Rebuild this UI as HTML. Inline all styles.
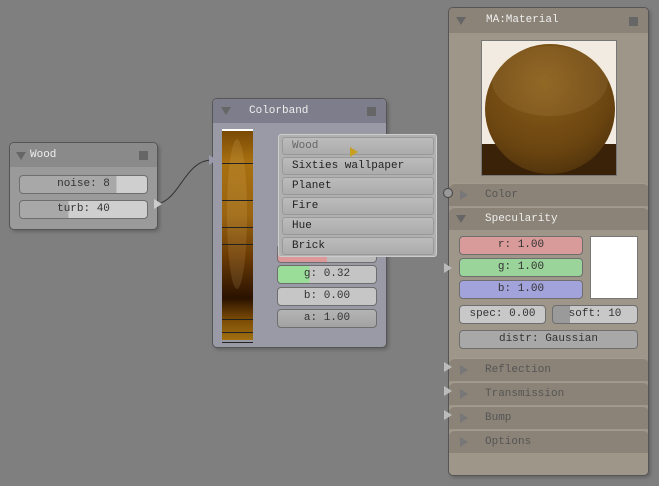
<!DOCTYPE html><html><head><style>
body{margin:0;width:659px;height:486px;background:#7f7f7f;position:relative;overflow:hidden;font-family:"Liberation Mono",monospace;font-size:11px}
.a{position:absolute;box-sizing:border-box}
.btn{position:absolute;box-sizing:border-box;border:1px solid #6e6e6e;border-radius:4px;background:linear-gradient(#b4b4b4,#a2a2a2);color:#333;text-align:center;line-height:17px;height:19px}
.tri{position:absolute;width:0;height:0;border-left:5px solid transparent;border-right:5px solid transparent;border-top:8px solid #666}
.rt{position:absolute;width:0;height:0;border-top:5px solid transparent;border-bottom:5px solid transparent;border-left:8px solid #777}
.sq{position:absolute;width:9px;height:9px;background:#666}
.row{position:absolute;left:0;width:200px;height:23px;background:#8b8377;border-top:1px solid #a39b8f;color:#555;line-height:23px;padding-left:36px;box-sizing:border-box;border-radius:6px 6px 0 0}
.mi{position:absolute;left:3px;width:152px;height:18px;box-sizing:border-box;border:1px solid #999;border-radius:3px;background:linear-gradient(#bcbcbc,#acacac);color:#222;padding-left:9px;line-height:16px}
</style></head><body>
<svg class="a" style="left:0;top:0" width="659" height="486"><path d="M157 204 C180 200,185 160,212 160" stroke="#333" fill="none"/></svg>
<!-- Wood -->
<div class="a" style="left:9px;top:142px;width:149px;height:88px;background:#9a9a9a;border:1px solid #555;border-radius:5px;box-shadow:2px 2px 3px #666">
 <div class="a" style="left:0;top:0;width:147px;height:24px;background:#8a8a8a;border-radius:5px 5px 0 0;color:#eee;line-height:24px;padding-left:20px">Wood</div>
 <div class="tri" style="left:6px;top:9px"></div><div class="sq" style="left:129px;top:8px"></div>
 <div class="btn" style="left:9px;top:32px;width:129px;background:linear-gradient(90deg,#a8a8a8 76%,#cfcfcf 76%)">noise: 8</div>
 <div class="btn" style="left:9px;top:57px;width:129px;background:linear-gradient(90deg,#a8a8a8 38%,#cfcfcf 38%)">turb: 40</div>
</div>
<div class="rt" style="left:154px;top:199px;border-left-color:#ccc"></div>
<!-- Colorband -->
<div class="a" style="left:212px;top:98px;width:175px;height:250px;background:#9a9aa6;border:1px solid #555;border-radius:5px;box-shadow:2px 2px 3px #666">
 <div class="a" style="left:0;top:0;width:173px;height:24px;background:#7d7d8b;border-radius:5px 5px 0 0;color:#eee;line-height:24px;padding-left:36px">Colorband</div>
 <div class="tri" style="left:8px;top:8px"></div><div class="sq" style="left:154px;top:8px"></div>
 <div class="a" style="left:9px;top:32px;width:31px;height:209px;background:linear-gradient(#7a4a05,#a87010 15%,#9a6410 40%,#6a3a05 60%,#2a1200 80%,#7a4a05 90%,#a07010)"></div>
 <div class="a" style="left:14px;top:40px;width:20px;height:150px;border-radius:50%;background:rgba(255,220,150,0.12)"></div>
 <div class="a" style="left:9px;top:30px;width:31px;height:2px;background:#fff"></div>
 <div class="a" style="left:9px;top:64px;width:31px;height:1px;background:#222"></div>
 <div class="a" style="left:9px;top:101px;width:31px;height:1px;background:#222"></div>
 <div class="a" style="left:9px;top:128px;width:31px;height:1px;background:#222"></div>
 <div class="a" style="left:9px;top:145px;width:31px;height:1px;background:#222"></div>
 <div class="a" style="left:9px;top:220px;width:31px;height:1px;background:#222"></div>
 <div class="a" style="left:9px;top:233px;width:31px;height:1px;background:#222"></div>
 <div class="a" style="left:9px;top:243px;width:31px;height:1px;background:#222"></div>
 <div class="btn" style="left:64px;top:145px;width:100px;background:linear-gradient(90deg,#d99 50%,#bbb 50%)">r: 0.50</div>
 <div class="btn" style="left:64px;top:166px;width:100px;background:linear-gradient(90deg,#9d9 32%,#c4c4c4 32%)">g: 0.32</div>
 <div class="btn" style="left:64px;top:188px;width:100px;background:#c6c6c6">b: 0.00</div>
 <div class="btn" style="left:64px;top:210px;width:100px">a: 1.00</div>
</div>
<div class="rt" style="left:209px;top:155px;border-left-color:#99a"></div>
<!-- menu -->
<div class="a" style="left:278px;top:134px;width:159px;height:123px;background:#b0b0b0;border:1px solid #ccc;border-radius:3px">
 <div class="mi" style="top:2px;color:#666">Wood</div>
 <div class="mi" style="top:22px">Sixties wallpaper</div>
 <div class="mi" style="top:42px">Planet</div>
 <div class="mi" style="top:62px">Fire</div>
 <div class="mi" style="top:82px">Hue</div>
 <div class="mi" style="top:102px">Brick</div>
</div>
<div class="rt" style="left:350px;top:147px;border-left-color:#c8a020"></div>
<!-- Material -->
<div class="a" style="left:448px;top:7px;width:201px;height:469px;background:#9e9689;border:1px solid #555;border-radius:5px;box-shadow:2px 2px 3px #666;overflow:hidden">
 <div class="a" style="left:0;top:0;width:200px;height:25px;background:#8b8377;color:#eee;line-height:25px;padding-left:37px">MA:Material</div>
 <div class="tri" style="left:7px;top:9px"></div><div class="sq" style="left:180px;top:9px"></div>
 <div class="a" style="left:32px;top:32px;width:136px;height:136px;background:linear-gradient(#f2ebe2 77%,#3a2208 77%);border:1px solid #777;overflow:hidden">
  <div class="a" style="left:3px;top:3px;width:130px;height:130px;border-radius:50%;background:radial-gradient(circle at 45% 30%,#8a5e1a,#6a4410 60%,#3a2508)"></div>
  <div class="a" style="left:10px;top:5px;width:116px;height:70px;border-radius:50%;background:rgba(255,230,180,0.08)"></div>
 </div>
 <div class="row" style="top:175px">Color</div>
 <div class="rt" style="left:11px;top:182px;border-left-color:#777"></div>
 <div class="row" style="top:199px;color:#eee">Specularity</div>
 <div class="tri" style="left:7px;top:207px"></div>
 <div class="btn" style="left:10px;top:228px;width:124px;background:#d99a9a">r: 1.00</div>
 <div class="btn" style="left:10px;top:250px;width:124px;background:#9ad49a">g: 1.00</div>
 <div class="btn" style="left:10px;top:272px;width:124px;background:#a3a3dc">b: 1.00</div>
 <div class="a" style="left:141px;top:228px;width:48px;height:63px;background:#fff;border:1px solid #777"></div>
 <div class="btn" style="left:10px;top:297px;width:87px;background:#c8c8c8">spec: 0.00</div>
 <div class="btn" style="left:103px;top:297px;width:86px;background:linear-gradient(90deg,#9a9a9a 20%,#c8c8c8 20%)">soft: 10</div>
 <div class="btn" style="left:10px;top:322px;width:179px;background:#a8a8a8">distr: Gaussian</div>
 <div class="row" style="top:350px">Reflection</div>
 <div class="rt" style="left:11px;top:357px"></div>
 <div class="row" style="top:374px">Transmission</div>
 <div class="rt" style="left:11px;top:381px"></div>
 <div class="row" style="top:398px">Bump</div>
 <div class="rt" style="left:11px;top:405px"></div>
 <div class="row" style="top:422px">Options</div>
 <div class="rt" style="left:11px;top:429px"></div>
</div>
<div class="rt" style="left:444px;top:263px;border-left-color:#bbb"></div>
<div class="rt" style="left:444px;top:362px;border-left-color:#bbb"></div>
<div class="rt" style="left:444px;top:386px;border-left-color:#bbb"></div>
<div class="rt" style="left:444px;top:410px;border-left-color:#bbb"></div>
<div class="a" style="left:443px;top:188px;width:10px;height:10px;border-radius:50%;border:1px solid #444;background:#999"></div>
</body></html>
